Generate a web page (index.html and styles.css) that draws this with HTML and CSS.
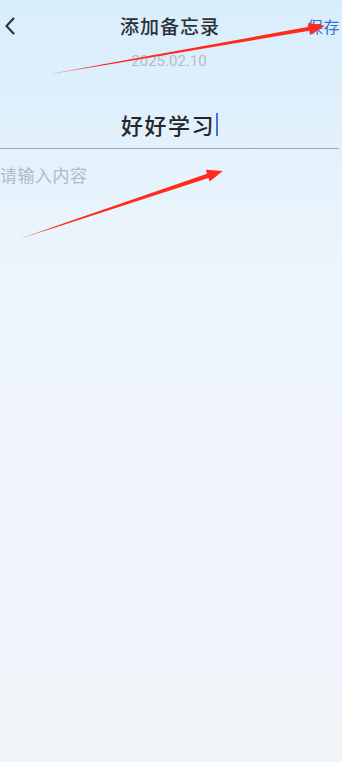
FILE: index.html
```html
<!DOCTYPE html>
<html lang="zh">
<head>
<meta charset="utf-8">
<title>添加备忘录</title>
<link rel="stylesheet" href="styles.css">
</head>
<body>
<div class="page">
  <header class="nav">
    <span class="back">
      <svg width="12" height="18" viewBox="0 0 12 18"><path d="M9.5 1.5 L2.5 9 L9.5 16.5" fill="none" stroke="#2b3038" stroke-width="2.1" stroke-linecap="round" stroke-linejoin="round"/></svg>
    </span>
    <h1 class="title">添加备忘录</h1>
    <span class="save">保存</span>
  </header>
  <div class="date">2025.02.10</div>
  <div class="heading"><span class="heading-text">好好学习</span><span class="caret"></span></div>
  <div class="divider"></div>
  <div class="placeholder">请输入内容</div>

  <svg class="annot" width="342" height="762" viewBox="0 0 342 762">
    <defs>
      <linearGradient id="g1" gradientUnits="userSpaceOnUse" x1="52" y1="74" x2="200" y2="48">
        <stop offset="0" stop-color="#ff2a1a" stop-opacity="0.3"/>
        <stop offset="0.35" stop-color="#ff2a1a" stop-opacity="1"/>
      </linearGradient>
      <linearGradient id="g2" gradientUnits="userSpaceOnUse" x1="22" y1="238" x2="120" y2="205">
        <stop offset="0" stop-color="#ff2a1a" stop-opacity="0.3"/>
        <stop offset="0.35" stop-color="#ff2a1a" stop-opacity="1"/>
      </linearGradient>
    </defs>
    <polygon fill="url(#g1)" points="52,74 309.5,30.8 310.2,34.7 325,25.8 308.2,22.9 308.9,26.8 52,73.4"/>
    <polygon fill="url(#g2)" points="22,238.3 208.5,177.9 209.7,181.6 222.7,171 205.9,169.8 207.1,173.7 22,237.7"/>
  </svg>
</div>
</body>
</html>
```

FILE: styles.css
```css
* { box-sizing: border-box; }
html, body { margin: 0; padding: 0; }
body {
  width: 342px;
  height: 762px;
  overflow: hidden;
  font-family: "Noto Sans CJK SC", "Noto Sans", Roboto, sans-serif;
}
.page {
  position: relative;
  width: 342px;
  height: 762px;
  background: linear-gradient(180deg, #d8edfb 0%, #e2f1fc 18%, #eaf4fc 30%, #eff5fc 42%, #f0f5fa 100%);
  display: flex;
  flex-direction: column;
}
.nav {
  height: 51px;
  display: grid;
  grid-template-columns: 1fr auto 1fr;
  align-items: center;
  padding-top: 1px;
}
.back {
  display: flex;
  align-items: center;
  padding-left: 4px;
  height: 20px;
}
.title {
  margin: 0;
  font-size: 19px;
  letter-spacing: 1px;
  font-weight: 500;
  color: #2b3038;
  line-height: 24px;
  padding-right: 2px;
}
.save {
  justify-self: end;
  font-size: 16px;
  letter-spacing: 0.5px;
  color: #3c6cd8;
  padding-right: 2px;
  line-height: 22px;
}
.date {
  text-align: center;
  font-family: Roboto, "Noto Sans", sans-serif;
  font-size: 15px;
  line-height: 20px;
  color: #b4bcc5;
  padding-right: 4px;
}
.heading {
  margin-top: 38px;
  height: 30px;
  display: flex;
  justify-content: center;
  align-items: center;
  padding-right: 3px;
}
.heading-text {
  font-size: 22px;
  letter-spacing: 1.5px;
  line-height: 30px;
  color: #24282e;
  font-weight: 500;
}
.caret {
  width: 2px;
  height: 23px;
  background: #4a6fe0;
  margin-left: 1px;
}
.divider {
  margin-top: 9px;
  height: 1px;
  width: 339px;
  background: #9ea7b0;
}
.placeholder {
  margin-top: 14px;
  margin-left: 0;
  font-size: 17px;
  letter-spacing: 0.5px;
  line-height: 24px;
  color: #b3bac2;
}
.annot {
  position: absolute;
  left: 0;
  top: 0;
  pointer-events: none;
}
```
